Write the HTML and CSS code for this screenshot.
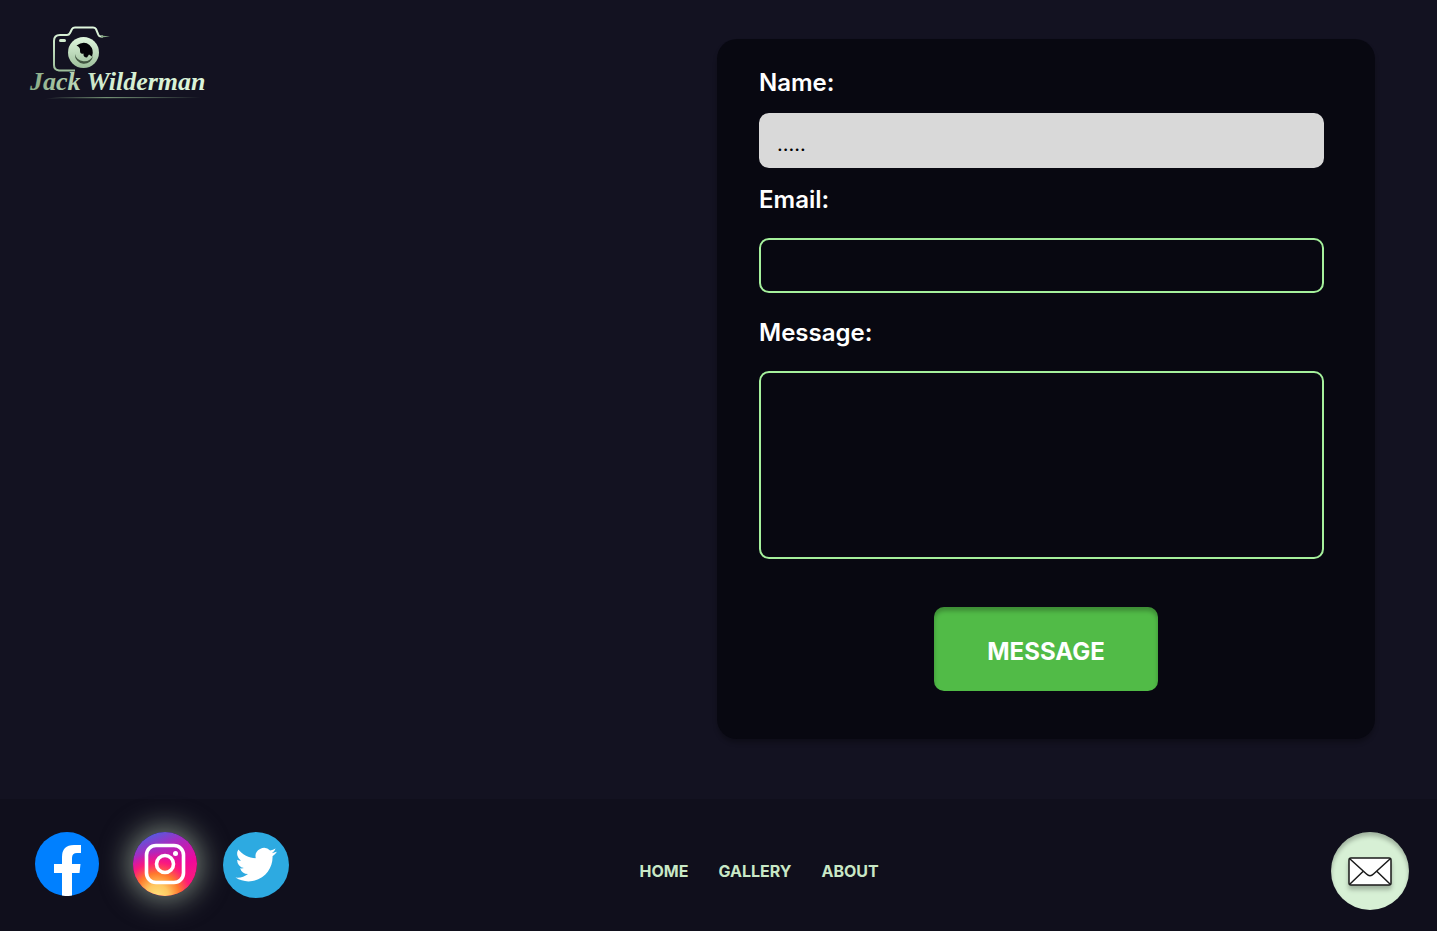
FILE: index.html
```html
<!DOCTYPE html>
<html lang="en">
<head>
    <meta charset="UTF-8">
    <meta name="viewport" content="width=device-width, initial-scale=1.0">
    <title>Jack Wilderman - Contact</title>
    <link rel="stylesheet" href="styles.css">
</head>
<body>
    <main class="contact">
        <a class="logo" href="#">
            <svg viewBox="0 0 190 78" width="190" height="78" role="img" aria-label="Jack Wilderman">
                <defs>
                    <linearGradient id="logoText" x1="0" y1="0" x2="1" y2="0">
                        <stop offset="0" stop-color="#86a984"/>
                        <stop offset="0.4" stop-color="#d3edd0"/>
                        <stop offset="1" stop-color="#dcf5da"/>
                    </linearGradient>
                    <linearGradient id="logoBody" x1="0" y1="0" x2="0" y2="1">
                        <stop offset="0" stop-color="#e0f7de"/>
                        <stop offset="1" stop-color="#9dbf9b"/>
                    </linearGradient>
                    <linearGradient id="logoLine" x1="0" y1="0" x2="1" y2="0">
                        <stop offset="0" stop-color="#86a984" stop-opacity="0"/>
                        <stop offset="0.4" stop-color="#86a984"/>
                        <stop offset="1" stop-color="#86a984" stop-opacity="0"/>
                    </linearGradient>
                </defs>
                <!-- camera -->
                <path d="M46 44.500H30Q25 44 25 39V15Q25 9 31 9H38Q40 9 41 7L43 3Q44 1.500 46 1.500H64Q66 1.500 67 3L69.500 9Q70 10.500 72 10.500H74" fill="none" stroke="url(#logoBody)" stroke-width="2"/>
                <path d="M72 9.500L81 10.500L72 11.500Z" fill="#86a984"/>
                <rect x="30" y="13" width="7" height="3" rx="1.500" fill="#d3edd0"/>
                <circle cx="54.500" cy="26.500" r="15.500" fill="url(#logoBody)"/>
                <path d="M46 28a9 9 0 0 0 18 1.500a9.500 9.500 0 0 1-18-1.500Z" fill="#415541"/>
                <path d="M47.500 19.500Q55 14.500 60.500 19Q65.500 24 63 30.500L60 28.500L58 31.500Q54 31.500 54.500 27.500Q51 28.500 51 24.500Q51.500 21.500 47.500 19.500Z" fill="#050508"/>
                <!-- name -->
                <text x="1" y="64" class="logo-name" fill="url(#logoText)">Jack Wilderman</text>
                <path d="M14 74Q22 71 34 71.200L172 71V72L34 72.300Q22 72 14 74Z" fill="url(#logoLine)"/>
            </svg>
        </a>

        <form class="card">
            <div class="field field-name">
                <label for="name">Name:</label>
                <input type="text" id="name" value=".....">
            </div>
            <div class="field">
                <label for="email">Email:</label>
                <input type="email" id="email">
            </div>
            <div class="field">
                <label for="message">Message:</label>
                <textarea id="message"></textarea>
            </div>
            <button type="submit">MESSAGE</button>
        </form>
    </main>

    <footer class="footer">
        <div class="socials">
            <a href="#" class="facebook" aria-label="Facebook">
                <svg viewBox="0 0 64 64" width="64" height="64">
                    <circle cx="32" cy="32" r="32" fill="#0080ff"/>
                    <path d="M27 64V41H19V32H27V25Q27 13 39 13H46V21H42Q37 21 37 26V32H45.500L44.500 41H37V63.600Q32 64.500 27 63.600Z" fill="#fff"/>
                </svg>
            </a>
            <a href="#" class="instagram" aria-label="Instagram">
                <svg viewBox="0 0 64 64" width="64" height="64">
                    <defs>
                        <linearGradient id="igBase" x1="0.300" y1="0" x2="0.700" y2="1">
                            <stop offset="0" stop-color="#4e5fe0"/>
                            <stop offset="0.250" stop-color="#a82bc0"/>
                            <stop offset="0.600" stop-color="#f0089a"/>
                            <stop offset="1" stop-color="#ff2a6c"/>
                        </linearGradient>
                        <radialGradient id="igWarm" cx="0.380" cy="1" r="0.700">
                            <stop offset="0" stop-color="#ffe07a"/>
                            <stop offset="0.250" stop-color="#ffc860"/>
                            <stop offset="0.500" stop-color="#ff7a2c"/>
                            <stop offset="0.750" stop-color="#ff1a78" stop-opacity="0.900"/>
                            <stop offset="1" stop-color="#f5088f" stop-opacity="0"/>
                        </radialGradient>
                    </defs>
                    <circle cx="32" cy="32" r="32" fill="url(#igBase)"/>
                    <circle cx="32" cy="32" r="32" fill="url(#igWarm)"/>
                    <g fill="none" stroke="#fff" stroke-width="3.600">
                        <rect x="13.500" y="13.500" width="37" height="37" rx="9.500"/>
                        <circle cx="32" cy="32" r="8.500"/>
                    </g>
                    <circle cx="42.500" cy="21.500" r="2.500" fill="#fff"/>
                </svg>
            </a>
            <a href="#" class="twitter" aria-label="Twitter">
                <svg viewBox="0 0 66 66" width="66" height="66">
                    <circle cx="33" cy="33" r="33" fill="#2daae1"/>
                    <g transform="translate(12.500 12) scale(1.720)">
                        <path d="M23.950 4.570a10 10 0 0 1-2.820.770 4.960 4.960 0 0 0 2.160-2.720c-.950.550-2 .960-3.130 1.190a4.920 4.920 0 0 0-8.380 4.480C7.690 8.100 4.070 6.130 1.640 3.160a4.920 4.920 0 0 0 1.520 6.570 4.900 4.900 0 0 1-2.230-.610v.060a4.920 4.920 0 0 0 3.950 4.830 5 5 0 0 1-2.210.080 4.940 4.940 0 0 0 4.600 3.420A9.870 9.870 0 0 1 0 19.540a13.990 13.990 0 0 0 7.550 2.210c9.050 0 14-7.500 14-13.990 0-.210 0-.420-.020-.630a9.940 9.940 0 0 0 2.460-2.550z" fill="#fff"/>
                    </g>
                </svg>
            </a>
        </div>

        <nav class="menu">
            <a href="#">HOME</a>
            <a href="#">GALLERY</a>
            <a href="#">ABOUT</a>
        </nav>

        <a class="mail" href="#" aria-label="Send a message">
            <svg viewBox="0 0 44 29" width="44" height="29">
                <rect x="1" y="1" width="42" height="27" rx="2" fill="#fff" stroke="#1a1a1a" stroke-width="1.500"/>
                <path d="M2 2L18.500 17Q22 20.500 25.500 17L42 2M2 27L15 14.500M42 27L29 14.500" fill="none" stroke="#1a1a1a" stroke-width="1.500"/>
            </svg>
        </a>
    </footer>
</body>
</html>
```

FILE: styles.css
```css
* {
    box-sizing: border-box;
}
body {
    font-family: Inter, "Liberation Sans", sans-serif;
    background-color: #131221;
    margin: 0;
    min-height: 100vh;
    display: flex;
    flex-direction: column;
}
.contact {
    flex: 1;
    display: grid;
    grid-template-columns: 1fr 1fr;
    align-items: start;
    gap: 30px;
    padding: 39px 62px 60px 29px;
}
.logo {
    justify-self: start;
    margin-top: -13px;
}
.logo svg {
    display: block;
}
.logo-name {
    font-family: "Liberation Serif", serif;
    font-size: 26px;
    font-style: italic;
    font-weight: bold;
}
.card {
    display: flex;
    flex-direction: column;
    gap: 25px;
    padding: 29px 42px 48px;
    background-color: #080811;
    border-radius: 20px;
    box-shadow: 0 4px 4px rgba(0, 0, 0, 0.25);
}
.field {
    display: flex;
    flex-direction: column;
    gap: 24px;
    padding-right: 9px;
}
.field-name {
    gap: 16px;
    margin-bottom: -8px;
}
label {
    color: white;
    font-size: 24px;
    font-weight: 600;
    line-height: 29px;
}
input,
textarea {
    width: 100%;
    padding: 8px 16px;
    border: 2px solid #a5f09c;
    border-radius: 10px;
    background-color: transparent;
    color: white;
    font-family: inherit;
    font-size: 20px;
}
input {
    height: 55px;
}
textarea {
    display: block;
    height: 188px;
    resize: none;
}
#name {
    padding-top: 15px;
    border-color: #d9d9d9;
    background-color: #d9d9d9;
    color: black;
}
button {
    align-self: center;
    width: 224px;
    height: 84px;
    margin-top: 23px;
    padding: 5px 0 0;
    border: none;
    border-radius: 10px;
    background-color: #51bb47;
    box-shadow: inset 0 4px 4px rgba(0, 0, 0, 0.25);
    color: white;
    font-family: inherit;
    font-size: 24px;
    font-weight: 700;
    cursor: pointer;
}
.footer {
    display: grid;
    grid-template-columns: 44% 1fr auto;
    align-items: center;
    padding: 33px 28px 21px 35px;
    background-color: #100f1c;
}
.socials {
    display: flex;
    align-items: flex-start;
    align-self: start;
    gap: 26px;
}
.socials a,
.socials svg {
    display: block;
}
.instagram {
    margin-left: 8px;
    border-radius: 50%;
    box-shadow: 0 0 28px 5px rgba(215, 240, 205, 0.5);
}
.menu {
    display: flex;
    gap: 30px;
}
.menu a {
    color: #c9e8c6;
    font-size: 16px;
    font-weight: 700;
    text-decoration: none;
}
.mail {
    display: flex;
    align-items: center;
    justify-content: center;
    width: 78px;
    height: 78px;
    border-radius: 50%;
    background-color: #d7f0d5;
    box-shadow: inset 0 4px 4px rgba(0, 0, 0, 0.25);
}
.mail svg {
    filter: drop-shadow(0 4px 2px rgba(0, 0, 0, 0.25));
}
```
